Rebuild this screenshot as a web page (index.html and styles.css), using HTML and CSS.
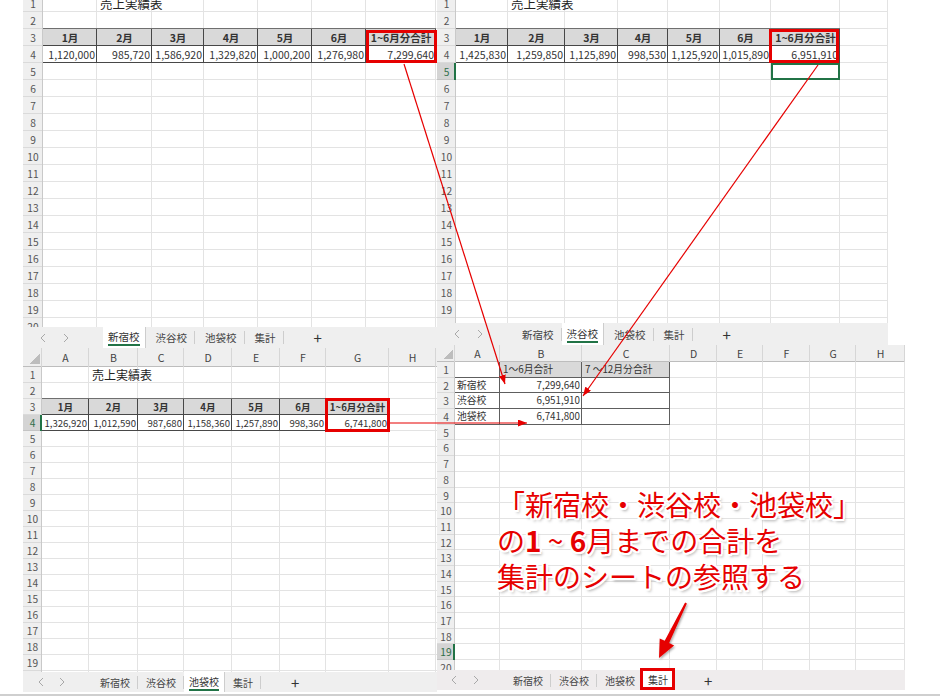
FILE: index.html
```html
<!DOCTYPE html>
<html lang="ja">
<head>
<meta charset="utf-8">
<title>売上実績表</title>
<link rel="stylesheet" href="styles.css">
</head>
<body>
<div class="canvas">

  <section class="win p1">
    <div class="sheet">
      <div class="body">
        <div class="row"><span class="rh">1</span><span class="c"></span><span class="c title">売上実績表</span></div>
        <div class="row"><span class="rh">2</span><span class="c bb"></span><span class="c bb"></span><span class="c bb"></span><span class="c bb"></span><span class="c bb"></span><span class="c bb"></span><span class="c bb"></span></div>
        <div class="row"><span class="rh">3</span><span class="c hd b">1月</span><span class="c hd b">2月</span><span class="c hd b">3月</span><span class="c hd b">4月</span><span class="c hd b">5月</span><span class="c hd b">6月</span><span class="c hd b">1~6月分合計</span></div>
        <div class="row"><span class="rh">4</span><span class="c n b">1,120,000</span><span class="c n b">985,720</span><span class="c n b">1,586,920</span><span class="c n b">1,329,820</span><span class="c n b">1,000,200</span><span class="c n b">1,276,980</span><span class="c n b">7,299,640</span></div>
        <div class="row"><span class="rh">5</span></div>
        <div class="row"><span class="rh">6</span></div>
        <div class="row"><span class="rh">7</span></div>
        <div class="row"><span class="rh">8</span></div>
        <div class="row"><span class="rh">9</span></div>
        <div class="row"><span class="rh">10</span></div>
        <div class="row"><span class="rh">11</span></div>
        <div class="row"><span class="rh">12</span></div>
        <div class="row"><span class="rh">13</span></div>
        <div class="row"><span class="rh">14</span></div>
        <div class="row"><span class="rh">15</span></div>
        <div class="row"><span class="rh">16</span></div>
        <div class="row"><span class="rh">17</span></div>
        <div class="row"><span class="rh">18</span></div>
        <div class="row"><span class="rh">19</span></div>
        <div class="row"><span class="rh">20</span></div>
      </div>
    </div>
    <div class="tabs">
      <span class="nav"><svg viewBox="0 0 6 10"><path d="M5 1L1 5L5 9"/></svg><svg viewBox="0 0 6 10"><path d="M1 1L5 5L1 9"/></svg></span>
      <span class="tab on"><span>新宿校</span></span>
      <span class="tab">渋谷校</span>
      <span class="tab">池袋校</span>
      <span class="tab">集計</span>
      <span class="plus">+</span>
    </div>
  </section>

  <section class="win p2">
    <div class="sheet">
      <div class="body">
        <div class="row"><span class="rh">1</span><span class="c"></span><span class="c title">売上実績表</span></div>
        <div class="row"><span class="rh">2</span><span class="c bb"></span><span class="c bb"></span><span class="c bb"></span><span class="c bb"></span><span class="c bb"></span><span class="c bb"></span><span class="c bb"></span></div>
        <div class="row"><span class="rh">3</span><span class="c hd b">1月</span><span class="c hd b">2月</span><span class="c hd b">3月</span><span class="c hd b">4月</span><span class="c hd b">5月</span><span class="c hd b">6月</span><span class="c hd b">1~6月分合計</span></div>
        <div class="row"><span class="rh">4</span><span class="c n b">1,425,830</span><span class="c n b">1,259,850</span><span class="c n b">1,125,890</span><span class="c n b">998,530</span><span class="c n b">1,125,920</span><span class="c n b">1,015,890</span><span class="c n b">6,951,910</span></div>
        <div class="row"><span class="rh hl">5</span><span class="c"></span><span class="c"></span><span class="c"></span><span class="c"></span><span class="c"></span><span class="c"></span><span class="c sel"></span></div>
        <div class="row"><span class="rh">6</span></div>
        <div class="row"><span class="rh">7</span></div>
        <div class="row"><span class="rh">8</span></div>
        <div class="row"><span class="rh">9</span></div>
        <div class="row"><span class="rh">10</span></div>
        <div class="row"><span class="rh">11</span></div>
        <div class="row"><span class="rh">12</span></div>
        <div class="row"><span class="rh">13</span></div>
        <div class="row"><span class="rh">14</span></div>
        <div class="row"><span class="rh">15</span></div>
        <div class="row"><span class="rh">16</span></div>
        <div class="row"><span class="rh">17</span></div>
        <div class="row"><span class="rh">18</span></div>
        <div class="row"><span class="rh">19</span></div>
        <div class="row"><span class="rh">20</span></div>
      </div>
    </div>
    <div class="tabs">
      <span class="nav"><svg viewBox="0 0 6 10"><path d="M5 1L1 5L5 9"/></svg><svg viewBox="0 0 6 10"><path d="M1 1L5 5L1 9"/></svg></span>
      <span class="tab">新宿校</span>
      <span class="tab on"><span>渋谷校</span></span>
      <span class="tab">池袋校</span>
      <span class="tab">集計</span>
      <span class="plus">+</span>
    </div>
  </section>

  <section class="win p3">
    <div class="sheet">
      <div class="colhead"><span class="corner"></span><span>A</span><span>B</span><span>C</span><span>D</span><span>E</span><span>F</span><span>G</span><span>H</span></div>
      <div class="body">
        <div class="row"><span class="rh">1</span><span class="c"></span><span class="c title">売上実績表</span></div>
        <div class="row"><span class="rh">2</span><span class="c bb"></span><span class="c bb"></span><span class="c bb"></span><span class="c bb"></span><span class="c bb"></span><span class="c bb"></span><span class="c bb"></span></div>
        <div class="row"><span class="rh">3</span><span class="c hd b">1月</span><span class="c hd b">2月</span><span class="c hd b">3月</span><span class="c hd b">4月</span><span class="c hd b">5月</span><span class="c hd b">6月</span><span class="c hd b">1~6月分合計</span></div>
        <div class="row"><span class="rh hl">4</span><span class="c n b">1,326,920</span><span class="c n b">1,012,590</span><span class="c n b">987,680</span><span class="c n b">1,158,360</span><span class="c n b">1,257,890</span><span class="c n b">998,360</span><span class="c n b">6,741,800</span></div>
        <div class="row"><span class="rh">5</span></div>
        <div class="row"><span class="rh">6</span></div>
        <div class="row"><span class="rh">7</span></div>
        <div class="row"><span class="rh">8</span></div>
        <div class="row"><span class="rh">9</span></div>
        <div class="row"><span class="rh">10</span></div>
        <div class="row"><span class="rh">11</span></div>
        <div class="row"><span class="rh">12</span></div>
        <div class="row"><span class="rh">13</span></div>
        <div class="row"><span class="rh">14</span></div>
        <div class="row"><span class="rh">15</span></div>
        <div class="row"><span class="rh">16</span></div>
        <div class="row"><span class="rh">17</span></div>
        <div class="row"><span class="rh">18</span></div>
        <div class="row"><span class="rh">19</span></div>
        <div class="row"><span class="rh">20</span></div>
      </div>
    </div>
    <div class="tabs">
      <span class="nav"><svg viewBox="0 0 6 10"><path d="M5 1L1 5L5 9"/></svg><svg viewBox="0 0 6 10"><path d="M1 1L5 5L1 9"/></svg></span>
      <span class="tab">新宿校</span>
      <span class="tab">渋谷校</span>
      <span class="tab on"><span>池袋校</span></span>
      <span class="tab">集計</span>
      <span class="plus">+</span>
    </div>
  </section>

  <section class="win p4">
    <div class="sheet">
      <div class="colhead"><span class="corner"></span><span>A</span><span>B</span><span>C</span><span>D</span><span>E</span><span>F</span><span>G</span><span>H</span></div>
      <div class="body">
        <div class="row"><span class="rh">1</span><span class="c b"></span><span class="c hd l b">1～6月合計</span><span class="c hd l b">7 ～12月分合計</span></div>
        <div class="row"><span class="rh">2</span><span class="c b">新宿校</span><span class="c n b">7,299,640</span><span class="c b"></span></div>
        <div class="row"><span class="rh">3</span><span class="c b">渋谷校</span><span class="c n b">6,951,910</span><span class="c b"></span></div>
        <div class="row"><span class="rh">4</span><span class="c b">池袋校</span><span class="c n b">6,741,800</span><span class="c b"></span></div>
        <div class="row"><span class="rh">5</span></div>
        <div class="row"><span class="rh">6</span></div>
        <div class="row"><span class="rh">7</span></div>
        <div class="row"><span class="rh">8</span></div>
        <div class="row"><span class="rh">9</span></div>
        <div class="row"><span class="rh">10</span></div>
        <div class="row"><span class="rh">11</span></div>
        <div class="row"><span class="rh">12</span></div>
        <div class="row"><span class="rh">13</span></div>
        <div class="row"><span class="rh">14</span></div>
        <div class="row"><span class="rh">15</span></div>
        <div class="row"><span class="rh">16</span></div>
        <div class="row"><span class="rh">17</span></div>
        <div class="row"><span class="rh">18</span></div>
        <div class="row"><span class="rh hl">19</span></div>
        <div class="row"><span class="rh">20</span></div>
      </div>
    </div>
    <div class="tabs">
      <span class="nav"><svg viewBox="0 0 6 10"><path d="M5 1L1 5L5 9"/></svg><svg viewBox="0 0 6 10"><path d="M1 1L5 5L1 9"/></svg></span>
      <span class="tab">新宿校</span>
      <span class="tab">渋谷校</span>
      <span class="tab">池袋校</span>
      <span class="tab on"><span>集計</span></span>
      <span class="plus">+</span>
    </div>
  </section>

  <svg class="overlay" width="940" height="698" viewBox="0 0 940 698">
    <defs>
      <marker id="ah" markerUnits="userSpaceOnUse" markerWidth="9" markerHeight="7" refX="9" refY="3.5" orient="auto" viewBox="0 0 9 7"><path d="M0 0L9 3.5L0 7z" fill="#e60000"/></marker>
      <filter id="sh" x="-50%" y="-50%" width="200%" height="200%"><feDropShadow dx="1" dy="1.5" stdDeviation="1" flood-color="#000" flood-opacity=".35"/></filter>
    </defs>
    <g fill="none" stroke="#e60000" stroke-width="3">
      <rect x="367.5" y="31.5" width="68" height="30"/>
      <rect x="770.5" y="30.5" width="67" height="31"/>
      <rect x="326.5" y="399.5" width="62" height="31"/>
      <rect x="641.5" y="669.5" width="32" height="19"/>
    </g>
    <g stroke="#e60000" stroke-width="1.2" marker-end="url(#ah)">
      <line x1="404" y1="64" x2="505" y2="384"/>
      <line x1="818" y1="65" x2="583" y2="396"/>
      <line x1="390" y1="423" x2="527" y2="423"/>
    </g>
    <polygon filter="url(#sh)" fill="#e60000" points="686.9,603.4 669.1,643 674.1,645.4 659,658 659.7,638.4 664.7,640.8 685.1,602.6"/>
  </svg>

  <p class="note">「新宿校・渋谷校・池袋校」<br>の<b>1</b> ~ <b>6</b>月までの合計を<br>集計のシートの参照する</p>
</div>
</body>
</html>
```

FILE: styles.css
```css
* { box-sizing: border-box; margin: 0; padding: 0; }
:root {
  --g: linear-gradient(#e3e3e3, #e3e3e3);
  --grid: #e3e3e3;
  --green: #217346;
}
html, body { background: #fff; }
body {
  font-family: "Noto Sans CJK JP", "Noto Sans", sans-serif;
  color: #333;
}
.canvas {
  position: relative;
  width: 940px;
  height: 696px;
  border-bottom: 2px solid #cfcfcf;
  overflow: hidden;
  background: #fff;
}

/* windows on the canvas */
.win { position: absolute; display: flex; flex-direction: column; }
.p1 { left: 23px; top: 0; width: 414px; --cols: 20px 54px 55px 52px 54px 54px 54px 70px; --rh: 17px; --fs: 10.5px; }
.p2 { left: 437px; top: 0; width: 451px; --cols: 19px 52px 57px 53px 50px 52px 51px 69px 48px; --rh: 17px; --fs: 10.5px; }
.p3 { left: 23px; top: 348px; width: 414px; --cols: 19px 47px 49px 46px 48px 48px 46px 63px 47px; --rh: 16px; --ch: 19px; --fs: 9.6px; }
.p4 { left: 437px; top: 345px; width: 468px; --cols: 18px 45px 82px 88px 47px 46px 47px 46px 49px; --rh: 15.7px; --ch: 17px; --fs: 9.8px; }

.sheet { overflow: hidden; background: #fff; }
.p1 .sheet { height: 327px; }
.p2 .sheet { height: 323px; }
.p3 .sheet { height: 324px; }
.p4 .sheet { height: 325px; }

.body {
  background-image: var(--g), var(--g), var(--g), var(--g), var(--g), var(--g), var(--g), var(--g);
  background-size: 1px 100%;
  background-repeat: no-repeat;
}
.p1 .body { margin-top: -5px; background-position: 73px 0, 128px 0, 180px 0, 234px 0, 288px 0, 342px 0, 412px 0, 412px 0; }
.p2 .body { margin-top: -5px; background-position: 70px 0, 127px 0, 180px 0, 230px 0, 282px 0, 333px 0, 402px 0, 450px 0; }
.p3 .body { background-position: 65px 0, 114px 0, 160px 0, 208px 0, 256px 0, 302px 0, 365px 0, 412px 0; }
.p4 .body { background-position: 62px 0, 144px 0, 232px 0, 279px 0, 325px 0, 372px 0, 418px 0, 467px 0; }

.row {
  display: grid;
  grid-template-columns: var(--cols);
  height: var(--rh);
  box-shadow: inset 0 -1px var(--grid);
}
.colhead {
  display: grid;
  grid-template-columns: var(--cols);
  height: var(--ch);
  background: #efefef;
  box-shadow: inset 0 -1px #bdbdbd;
  font-size: 10.5px;
  color: #444;
}
.colhead span {
  text-align: center;
  line-height: var(--ch);
  box-shadow: inset -1px 0 #d6d6d6, inset 0 -1px #bdbdbd;
}
.colhead .corner { display: flex; align-items: flex-end; justify-content: flex-end; padding: 0 2px 3px 0; }
.colhead .corner::after {
  content: "";
  width: 10px;
  height: 10px;
  background: linear-gradient(135deg, transparent 50%, #bdbdbd 50%);
}

.rh {
  font-size: 10.2px;
  text-align: center;
  line-height: var(--rh);
  background: #efefef;
  color: #555;
  box-shadow: inset -1px 0 #c9c9c9, inset 0 -1px #dadada;
}
.rh.hl {
  background: #d4d4d4;
  color: #2f6e49;
  box-shadow: inset -2px 0 var(--green), inset 0 -1px #c4c4c4;
}

.c {
  overflow: hidden;
  white-space: nowrap;
  padding: 0 2px;
  font-size: var(--fs);
  line-height: var(--rh);
  color: #333;
}
.title { overflow: visible; font-size: 12.5px; color: #222; padding-left: 3px; }
.p3 .title { font-size: 12px; }
.hd { background: #d9d9d9; text-align: center; font-weight: 700; padding: 0; color: #333; }
.hd.l { text-align: left; font-weight: 400; padding: 0 3px; }
.n { text-align: right; }
.b { box-shadow: inset -1px -1px #474747; }
.bb { box-shadow: inset 0 -1px #6f6f6f; }
.p4 .b { box-shadow: inset -1px -1px #5e5e5e; }
.sel { box-shadow: inset 0 0 0 2px var(--green); }

/* sheet tabs */
.tabs {
  display: flex;
  align-items: center;
  background: #efefef;
  font-size: 10.5px;
  color: #444;
}
.p1 .tabs { height: 21px; }
.p2 .tabs { height: 22px; }
.p3 .tabs { height: 20px; font-size: 10px; }
.p4 .tabs { height: 20px; font-size: 10px; background: #efeced; }
.nav { display: flex; align-items: center; gap: 17px; padding-left: 17px; height: 100%; flex: none; }
.p1 .nav { width: 80px; }
.p2 .nav { width: 75px; }
.p3 .nav { width: 69px; padding-left: 15px; gap: 15px; }
.p4 .nav { width: 68px; padding-left: 14px; gap: 16px; }
.nav svg { width: 6px; height: 10px; fill: none; stroke: #a8a8a8; stroke-width: 1; }
.tab {
  flex: none;
  padding: 0 7px 0 10px;
  border-right: 1px solid #cdcdcd;
  height: 13px;
  line-height: 13px;
}
.p3 .tab, .p4 .tab { padding: 0 7px 0 8px; }
.tab.on {
  height: 100%;
  background: #fff;
  padding: 0 5px;
  display: flex;
  align-items: center;
  color: #333;
}
.p3 .tab.on, .p4 .tab.on { padding: 0 5px; }
.tab.on span { border-bottom: 2px solid var(--green); line-height: 14px; padding-top: 1px; }
.plus { margin-left: 30px; font-size: 15px; line-height: 1; color: #333; }

/* overlay: arrows, boxes, annotation */
.overlay { position: absolute; left: 0; top: 0; pointer-events: none; }
.note {
  position: absolute;
  left: 497px;
  top: 486px;
  font-size: 28px;
  line-height: 36px;
  font-weight: 400;
  color: #e60000;
  white-space: nowrap;
  text-shadow:
    2px 0 #fff, -2px 0 #fff, 0 2px #fff, 0 -2px #fff,
    1.5px 1.5px #fff, -1.5px 1.5px #fff, 1.5px -1.5px #fff, -1.5px -1.5px #fff,
    2px 3px 3px rgba(0, 0, 0, .35);
}
.note b { font-weight: 700; letter-spacing: 0; }
```
